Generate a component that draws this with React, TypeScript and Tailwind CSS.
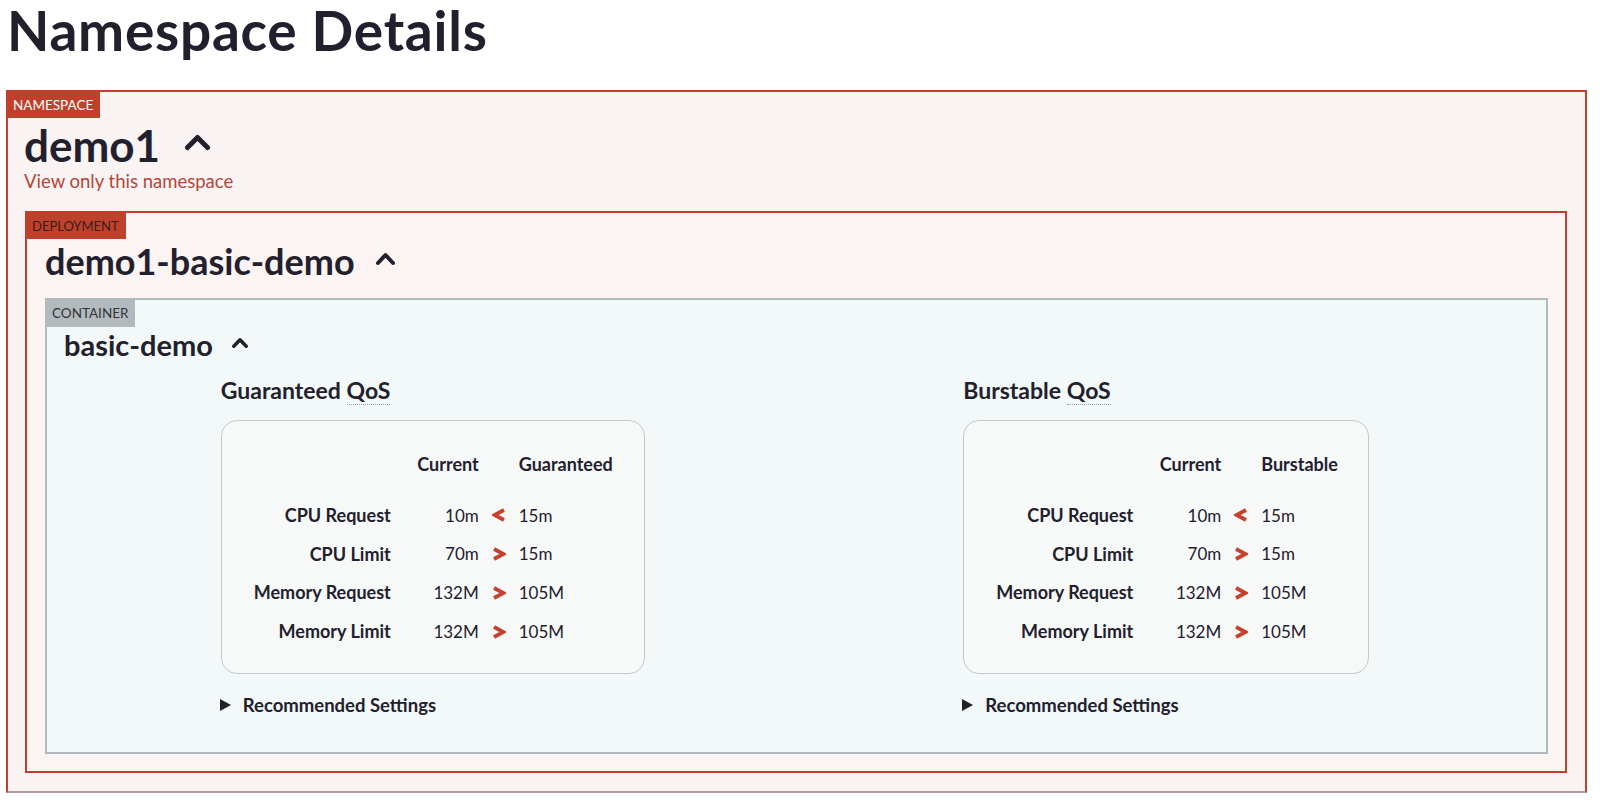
import React from 'react';

type Row = { label: string; current: string; op: '<' | '>'; target: string };

const rows: Row[] = [
    { label: 'CPU Request', current: '10m', op: '<', target: '15m' },
    { label: 'CPU Limit', current: '70m', op: '>', target: '15m' },
    { label: 'Memory Request', current: '132M', op: '>', target: '105M' },
    { label: 'Memory Limit', current: '132M', op: '>', target: '105M' },
];

const ChevronUp: React.FC<{ w: number; h: number; sw: number }> = ({ w, h, sw }) => (
    <svg width={w} height={h} viewBox={`0 0 ${w} ${h}`} className="shrink-0">
        <polyline
            points={`${sw / 2 + 1},${h - sw / 2 - 1} ${w / 2},${sw / 2 + 1} ${w - sw / 2 - 1},${h - sw / 2 - 1}`}
            fill="none"
            stroke="#22202d"
            strokeWidth={sw}
            strokeLinecap="round"
            strokeLinejoin="round"
        />
    </svg>
);

const Compare: React.FC<{ op: '<' | '>' }> = ({ op }) => (
    <svg width="14" height="14" viewBox="0 0 14 14">
        <polyline
            points={op === '<' ? '12,2 2.5,7 12,12' : '2,2 11.5,7 2,12'}
            fill="none"
            stroke="#c8402b"
            strokeWidth="3.8"
            strokeLinejoin="miter"
        />
    </svg>
);

const QosCard: React.FC<{ title: string; column: string; width: string }> = ({ title, column, width }) => (
    <div className={`${width} mx-auto`}>
        <h3 className="text-[23px] leading-none font-bold mt-[20px]">
            {title.replace(' QoS', '')}{' '}
            <abbr title="Quality of Service" className="no-underline border-b border-dotted border-[#9aa0a6]">
                QoS
            </abbr>
        </h3>
        <div className="mt-[18px] h-[254px] rounded-[16px] border border-[#c6c9cc] bg-[#f7f9f9] pt-[30px] pl-[32px]">
            <div className="grid grid-cols-[137px_88px_40px_1fr] h-[24px] items-center text-[18px] font-bold">
                <span />
                <span className="text-right">Current</span>
                <span />
                <span>{column}</span>
            </div>
            <div className="mt-[21px]">
                {rows.map((r) => (
                    <div key={r.label} className="grid grid-cols-[137px_88px_40px_1fr] h-[38.8px] items-center">
                        <span className="text-right text-[18px] font-bold whitespace-nowrap">{r.label}</span>
                        <span className="text-right text-[17px]">{r.current}</span>
                        <span className="flex justify-center">
                            <Compare op={r.op} />
                        </span>
                        <span className="text-[17px]">{r.target}</span>
                    </div>
                ))}
            </div>
        </div>
        <div className="mt-[22px] flex items-center h-[18px]">
            <svg width="11" height="12" viewBox="0 0 11 12" className="ml-[-1px]">
                <polygon points="0,0 11,6 0,12" fill="#22202d" />
            </svg>
            <span className="ml-[12px] text-[18.5px] leading-none font-bold">Recommended Settings</span>
        </div>
    </div>
);

export default function App() {
    return (
        <div className="min-h-screen bg-white font-['Lato',sans-serif] text-[#22202d]">
            <h1 className="text-[55px] leading-[60px] tracking-[0.75px] font-bold pl-[7px] m-0 h-[60px]">Namespace Details</h1>

            <section className="mt-[30px] ml-[6px] w-[1581px] border-2 border-[#c0412b] border-b-[#b0999c] bg-[#f9f3f3] pb-[18px]">
                <div className="-mt-[2px] -ml-[2px] inline-block h-[26px] px-[7px] bg-[#c0412b] text-white text-[13.5px] leading-[26px]">
                    NAMESPACE
                </div>
                <div className="pl-[16px] flex items-center h-[44px] mt-[5px]">
                    <span className="text-[44px] leading-none font-bold">demo1</span>
                    <span className="ml-[24px] mt-[-6px]">
                        <ChevronUp w={27} h={17} sw={5} />
                    </span>
                </div>
                <a className="block pl-[16px] mt-[5px] text-[18.5px] leading-[18px] text-[#b4463a]">View only this namespace</a>

                <section className="mt-[21px] ml-[17px] mr-[18px] border-2 border-[#c0412b] bg-[#fcf3f3] pb-[17px]">
                    <div className="-mt-[2px] -ml-[2px] inline-block h-[26px] px-[7px] bg-[#c0412b] text-[#3b1c18] text-[13px] leading-[26px]">
                        DEPLOYMENT
                    </div>
                    <div className="pl-[18px] flex items-center h-[37px] mt-[3px]">
                        <span className="text-[36px] leading-none font-bold">demo1-basic-demo</span>
                        <span className="ml-[20px] mt-[-4px]">
                            <ChevronUp w={21} h={14} sw={4} />
                        </span>
                    </div>

                    <section className="mt-[19px] ml-[18px] mr-[17px] border-2 border-[#b3babe] bg-[#f3f8f8] pb-[38px]">
                        <div className="-mt-[2px] -ml-[2px] inline-block h-[27px] px-[7px] bg-[#b3babe] text-[#33323a] text-[13.5px] leading-[27px]">
                            CONTAINER
                        </div>
                        <div className="pl-[17px] flex items-center h-[30px] mt-[2px]">
                            <span className="text-[29px] leading-none font-bold">basic-demo</span>
                            <span className="ml-[18px] mt-[-3px]">
                                <ChevronUp w={18} h={12} sw={3.5} />
                            </span>
                        </div>

                        <div className="grid grid-cols-2 pl-[19px] pr-[13px]">
                            <QosCard title="Guaranteed QoS" column="Guaranteed" width="w-[424px]" />
                            <QosCard title="Burstable QoS" column="Burstable" width="w-[406px]" />
                        </div>
                    </section>
                </section>
            </section>
        </div>
    );
}
